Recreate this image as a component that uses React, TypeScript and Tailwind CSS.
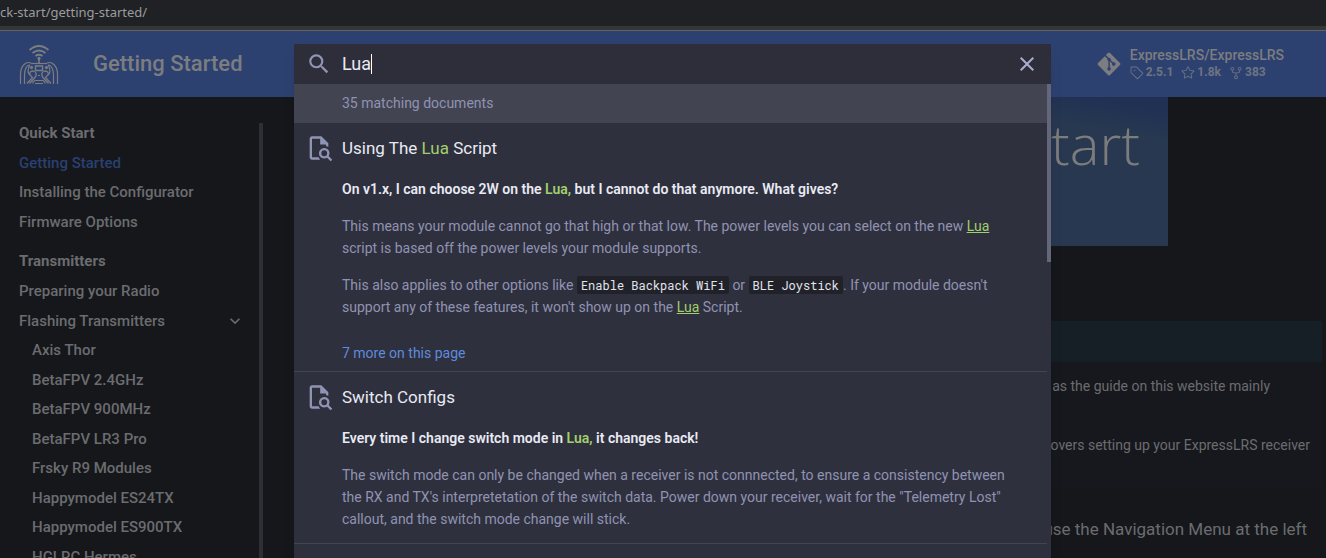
import { GoRepoForked, GoStar, GoTag } from "react-icons/go";
import { FaGitAlt } from "react-icons/fa";
import type { ReactNode } from "react";

function Icon({ d, className }: { d: string; className: string }) {
  return (
    <svg viewBox="0 0 24 24" fill="currentColor" className={className} aria-hidden="true">
      <path d={d} />
    </svg>
  );
}

const MAGNIFY =
  "M9.5 3A6.5 6.5 0 0 1 16 9.5c0 1.61-.59 3.09-1.56 4.23l.27.27h.79l5 5-1.5 1.5-5-5v-.79l-.27-.27A6.516 6.516 0 0 1 9.5 16 6.5 6.5 0 0 1 3 9.5 6.5 6.5 0 0 1 9.5 3m0 2C7 5 5 7 5 9.5S7 14 9.5 14 14 12 14 9.5 12 5 9.5 5z";
const CLOSE =
  "M19 6.41 17.59 5 12 10.59 6.41 5 5 6.41 10.59 12 5 17.59 6.41 19 12 13.41 17.59 19 19 17.59 13.41 12 19 6.41z";
const CHEVRON = "M7.41 8.58 12 13.17l4.59-4.59L18 10l-6 6-6-6 1.41-1.42z";
const FILE_SEARCH =
  "M14 2H6c-1.11 0-2 .89-2 2v16c0 1.11.89 2 2 2h7c-.57-.59-1.02-1.27-1.34-2H6V4h7v5h5v1.18c.71.16 1.39.43 2 .82V8l-6-6m6.31 16.9c1.33-2.11.69-4.9-1.4-6.22-2.11-1.33-4.91-.68-6.22 1.4-1.34 2.11-.69 4.89 1.4 6.22 1.46.93 3.32.93 4.79.02L22 23.39 23.39 22l-3.08-3.1m-3.81.1a2.5 2.5 0 0 1-2.5-2.5 2.5 2.5 0 0 1 2.5-2.5 2.5 2.5 0 0 1 2.5 2.5 2.5 2.5 0 0 1-2.5 2.5z";

function Logo() {
  return (
    <svg viewBox="0 0 40 40" className="size-10" fill="none" stroke="currentColor" aria-hidden="true">
      <path strokeWidth="1.9" d="M10.5 6Q20-2 29.5 6M13.5 9Q20 4 26.5 9M16.5 12Q20 9.500 23.500 12" />
      <path strokeWidth="1.6" d="M20 13v6" />
      <circle cx="20" cy="14.500" r="1.200" fill="currentColor" />
      <path strokeWidth="1.200" d="M12 19.500h16" />
      <path strokeWidth="1.200" d="M12 19C7 17 1.500 22 1.500 30V40M5.500 40V31C5.500 25 8 21 10.500 21C9 25 8 29 11 31" />
      <path strokeWidth="1.200" d="M28 19C33 17 38.500 22 38.500 30V40M34.500 40V31C34.500 25 32 21 29.500 21C31 25 32 29 29 31" />
      <path strokeWidth="1.400" d="M16.500 22h7v4.500h-7z" />
      <circle cx="12.500" cy="23.500" r="1.200" fill="currentColor" />
      <circle cx="27.500" cy="23.500" r="1.200" fill="currentColor" />
      <path strokeWidth="1.300" d="M8 39.500L13.500 33.500L11 31C10 28 12 27 14.500 27C17.500 28 18 31 16 33.500L10.500 39.500M32 39.500L26.500 33.500L29 31C30 28 28 27 25.500 27C22.500 28 22 31 24 33.500L29.500 39.500" />
      <path strokeWidth="1.200" d="M14 39.500V38L16 36.500H24L26 38V39.500M16 39.500h8M19 31.500h2" />
    </svg>
  );
}

function Mark({ children }: { children: ReactNode }) {
  return <mark className="bg-transparent text-[#a2cf6e]">{children}</mark>;
}

function LinkMark() {
  return <mark className="bg-transparent text-[#a2cf6e] underline">Lua</mark>;
}

function Code({ children }: { children: ReactNode }) {
  return (
    <code className="rounded-xs bg-[#212229] px-1 py-px font-['Roboto_Mono','DejaVu_Sans_Mono',monospace] text-xs text-[#e2e4ee]">
      {children}
    </code>
  );
}

function Result({ title, children }: { title: ReactNode; children: ReactNode }) {
  return (
    <li className="flex border-b border-[#43444f] pl-[11px]">
      <Icon d={FILE_SEARCH} className="mt-[11px] size-7 shrink-0 text-[#9094b4]" />
      <article className="flex-1 pr-8 pl-[9px] text-sm leading-[22px] text-[#8f93b3]">
        <h2 className="pt-[13px] pb-[18px] text-[17px] leading-6 text-[#e8eaf4]">{title}</h2>
        {children}
      </article>
    </li>
  );
}

const transmitters = [
  "Axis Thor",
  "BetaFPV 2.4GHz",
  "BetaFPV 900MHz",
  "BetaFPV LR3 Pro",
  "Frsky R9 Modules",
  "Happymodel ES24TX",
  "Happymodel ES900TX",
  "HGLRC Hermes",
];

export default function App() {
  return (
    <div className="relative flex h-screen flex-col overflow-hidden bg-[#15171b] font-[Roboto,sans-serif] text-[#6b6c6f]">
      <div className="flex h-[26px] shrink-0 items-center bg-[#202124] font-['Noto_Sans',sans-serif] text-[13px] text-[#9b9c9f]">
        ck-start/getting-started/
      </div>
      <div className="h-[5px] shrink-0 border-b border-[#626262] bg-[#353638]" />
      <header className="flex h-[66px] shrink-0 items-center bg-[#2d4170] pr-10 pl-[19px] text-[#7c7d80]">
        <a href="#home" aria-label="Home">
          <Logo />
        </a>
        <span className="pb-0.5 pl-[34px] text-[22px] font-medium">Getting Started</span>
        <a href="#repo" className="ml-auto flex items-center gap-2">
          <FaGitAlt className="size-[26px]" />
          <span className="flex flex-col pr-0.5 font-medium">
            <span className="text-sm leading-[17px]">ExpressLRS/ExpressLRS</span>
            <span className="flex gap-2 text-xs leading-[17px] font-bold text-[#6d7482]">
              <span className="flex items-center gap-0.5"><GoTag className="size-[14px]" />2.5.1</span>
              <span className="flex items-center gap-0.5"><GoStar className="size-[14px]" />1.8k</span>
              <span className="flex items-center gap-0.5"><GoRepoForked className="size-[14px]" />383</span>
            </span>
          </span>
        </a>
      </header>

      <div className="flex min-h-0 flex-1">
        <nav className="mt-[26px] w-[263px] shrink-0 overflow-hidden border-r-4 border-[#2e2f34] pl-[19px] text-[15px] leading-[30px] font-medium" aria-label="Navigation">
          <div className="-mt-[5px]">
            <h2 className="font-bold">Quick Start</h2>
            <ul>
              <li><a href="#getting-started" className="text-[#2a4070]">Getting Started</a></li>
              <li className="leading-[29px]"><a href="#configurator">Installing the Configurator</a></li>
              <li><a href="#firmware">Firmware Options</a></li>
            </ul>
            <h2 className="pt-[9px] font-bold">Transmitters</h2>
            <ul>
              <li><a href="#radio">Preparing your Radio</a></li>
              <li>
                <a href="#flashing" className="flex items-center justify-between pr-[14px]">
                  Flashing Transmitters
                  <Icon d={CHEVRON} className="size-5" />
                </a>
                <ul className="pl-[13px] leading-[29px]">
                  {transmitters.map((name) => (
                    <li key={name} className="odd:pb-px"><a href="#flashing">{name}</a></li>
                  ))}
                </ul>
              </li>
            </ul>
          </div>
        </nav>

        <main className="flex flex-1 flex-col items-end pl-[31px] text-sm">
          <div className="w-full pr-[158px]">
            <div className="flex h-[149px] items-start justify-end bg-linear-to-tr from-[#273850] from-85% to-[#213154] to-95% pt-2 pr-7">
              <span className="font-['Open_Sans',sans-serif] text-[56px] leading-[76px] font-light text-[#7c7c7c]">Start</span>
            </div>
          </div>
          <div className="mt-[75px] h-[41px] w-full pr-1">
            <div className="h-full bg-[#171f26]" />
          </div>
          <div className="w-full pr-1">
            <div className="flex flex-col items-end bg-[#17181d]">
              <p className="pt-[13px] pr-[52px] leading-[22px]">as the guide on this website mainly</p>
              <p className="pt-[37px] pr-3 pb-[33px] leading-[22px]">covers setting up your ExpressLRS receiver</p>
            </div>
          </div>
          <p className="pt-[26px] pr-[19px] text-[17px] leading-7">use the Navigation Menu at the left</p>
        </main>
      </div>

      <section className="absolute top-11 right-[275px] bottom-0 left-[294px] flex flex-col overflow-hidden rounded-t-xs bg-[#2f303d] shadow-lg" aria-label="Search">
        <label className="flex h-10 shrink-0 items-center bg-[#2d2e39] pr-3 pl-3">
          <Icon d={MAGNIFY} className="size-[26px] shrink-0 text-[#9094b4]" />
          <span className="flex flex-1 items-center pl-2.5">
            <input
              aria-label="Search"
              defaultValue="Lua"
              className="field-sizing-content text-lg leading-6 text-[#e8eaf4] caret-transparent outline-none"
            />
            <span className="h-5 w-px bg-white" />
          </span>
          <button type="button" aria-label="Clear" className="text-[#a9add0]">
            <Icon d={CLOSE} className="size-6" />
          </button>
        </label>
        <div className="flex min-h-0 flex-1">
          <div className="flex-1">
            <div className="h-[39px] bg-[#434451] pl-12 text-sm leading-[38px] text-[#8f93b3]">35 matching documents</div>
            <ol>
              <Result title={<>Using The <Mark>Lua</Mark> Script</>}>
                <h3 className="pb-[15px] font-semibold text-[#e8eaf4]">
                  On v1.x, I can choose 2W on the <Mark>Lua,</Mark> but I cannot do that anymore. What gives?
                </h3>
                <p className="pb-[15px]">
                  This means your module cannot go that high or that low. The power levels you can select on the new{" "}
                  <LinkMark /> script is based off the power levels your module supports.
                </p>
                <p>
                  This also applies to other options like <Code>Enable Backpack WiFi</Code> or <Code>BLE Joystick</Code>.
                  If your module doesn't support any of these features, it won't show up on the <LinkMark /> Script.
                </p>
                <a href="#more" className="block pt-6 pb-[7px] text-[#5e8bde]">7 more on this page</a>
              </Result>
              <Result title="Switch Configs">
                <h3 className="pb-[15px] font-semibold text-[#e8eaf4]">
                  Every time I change switch mode in <Mark>Lua,</Mark> it changes back!
                </h3>
                <p className="pb-[13px]">
                  The switch mode can only be changed when a receiver is not connnected, to ensure a consistency between
                  the RX and TX's interpretetation of the switch data. Power down your receiver, wait for the "Telemetry
                  Lost" callout, and the switch mode change will stick.
                </p>
              </Result>
            </ol>
          </div>
          <div className="h-[178px] w-1 bg-[#646779]" />
        </div>
      </section>
    </div>
  );
}
